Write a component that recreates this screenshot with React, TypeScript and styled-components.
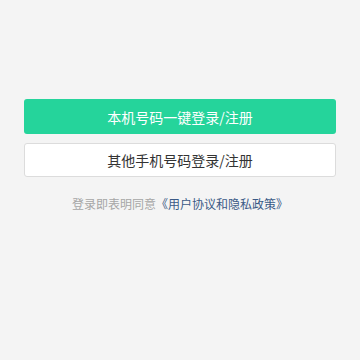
import styled, { createGlobalStyle } from "styled-components";

const GlobalStyle = createGlobalStyle`
  html, body {
    margin: 0;
    padding: 0;
    background: #f4f4f4;
    font-family: "Noto Sans CJK SC", "Noto Sans", sans-serif;
  }
`;

export default function App() {
  return (
    <>
      <GlobalStyle />
      <Page>
        <PrimaryButton>本机号码一键登录/注册</PrimaryButton>
        <SecondaryButton>其他手机号码登录/注册</SecondaryButton>
        <Agreement>
          登录即表明同意<AgreementLink>《用户协议和隐私政策》</AgreementLink>
        </Agreement>
      </Page>
    </>
  );
}

// STYLES

const Page = styled.div`
  display: flex;
  flex-direction: column;
  align-items: stretch;
  width: 360px;
  height: 360px;
  box-sizing: border-box;
  padding: 99px 24px 0 24px;
  background: #f4f4f4;
`;

const Button = styled.button`
  display: flex;
  justify-content: center;
  align-items: center;
  height: 35px;
  border-radius: 3px;
  font-family: "Noto Sans CJK SC", "Noto Sans", sans-serif;
  font-size: 14px;
  cursor: pointer;
  padding: 0;
  &:focus {
    outline: none;
  }
`;

const PrimaryButton = styled(Button)`
  background: #25d49b;
  color: #ffffff;
  border: none;
`;

const SecondaryButton = styled(Button)`
  margin-top: 9px;
  height: 34px;
  background: #ffffff;
  color: #333333;
  border: 1px solid #dcdcdc;
`;

const Agreement = styled.div`
  margin-top: 18px;
  text-align: center;
  font-size: 12px;
  line-height: 17px;
  color: #a6a6a6;
`;

const AgreementLink = styled.span`
  color: #3a5a86;
`;
